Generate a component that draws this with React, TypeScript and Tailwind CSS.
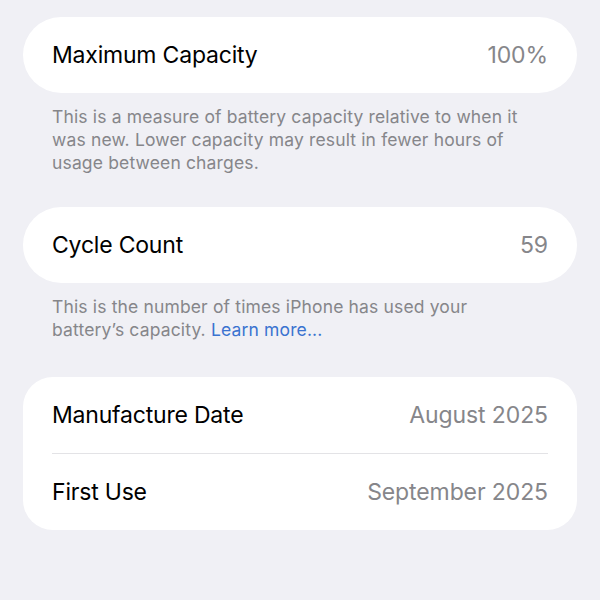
import React from "react";

const font = { fontFamily: "Inter, 'Noto Sans', sans-serif" };

function Row({ label, value }: { label: string; value: string }) {
  return (
    <div className="flex h-[76px] items-center justify-between px-[29px]">
      <span className="text-[23px] tracking-[-0.2px] text-black">{label}</span>
      <span className="text-[23px] tracking-[-0.1px] text-[#86868a]">{value}</span>
    </div>
  );
}

export default function App() {
  return (
    <div
      className="h-[600px] w-[600px] overflow-hidden bg-[#f0f0f5] px-[23px] pt-[17px]"
      style={font}
    >
      <div className="rounded-[38px] bg-white">
        <Row label="Maximum Capacity" value="100%" />
      </div>
      <p className="pl-[29px] pr-[40px] pt-[12px] text-[17.5px] leading-[23px] tracking-[0.15px] text-[#86868a]">
        This is a measure of battery capacity relative to when it was new. Lower capacity may result in fewer hours of usage between charges.
      </p>
      <div className="mt-[33px] rounded-[38px] bg-white">
        <Row label="Cycle Count" value="59" />
      </div>
      <p className="pl-[29px] pr-[40px] pt-[12px] text-[17.5px] leading-[23px] tracking-[0.15px] text-[#86868a]">
        This is the number of times iPhone has used your battery’s capacity. <span className="text-[#3a73d0]">Learn more...</span>
      </p>
      <div className="mt-[36px] rounded-[30px] bg-white">
        <Row label="Manufacture Date" value="August 2025" />
        <div className="mx-[29px] h-px bg-[#e3e3e6]" />
        <Row label="First Use" value="September 2025" />
      </div>
    </div>
  );
}
